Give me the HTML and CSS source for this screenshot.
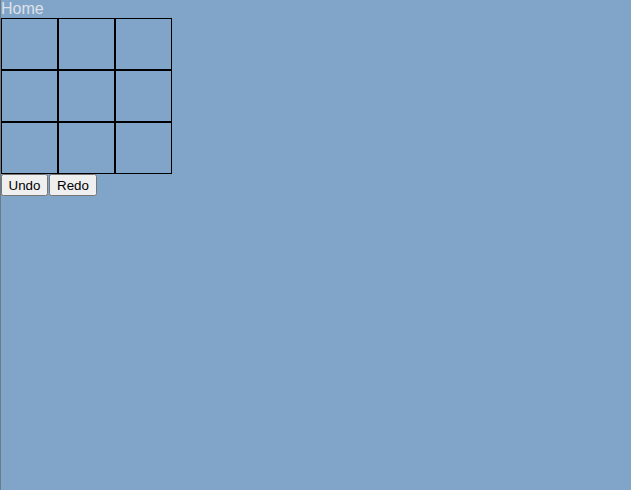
FILE: index.html
```html
<!DOCTYPE html>
<html lang="en">
<head>
    <meta charset="UTF-8">
    <title>Tic Tac Toe</title>
    <link rel="stylesheet" href="styles.css">
</head>
<body>
    <div class="app">
        <a class="home" href="#">Home</a>
        <div class="board">
            <div class="cell"></div>
            <div class="cell"></div>
            <div class="cell"></div>
            <div class="cell"></div>
            <div class="cell"></div>
            <div class="cell"></div>
            <div class="cell"></div>
            <div class="cell"></div>
            <div class="cell"></div>
        </div>
        <div class="controls">
            <button class="undo">Undo</button>
            <button class="redo">Redo</button>
        </div>
    </div>
</body>
</html>
```

FILE: styles.css
```css
html, body {
    margin: 0;
    padding: 0;
    height: 100%;
}
body {
    background-color: #80a5c8;
    font-family: 'Liberation Sans', Arial, sans-serif;
    border-left: 1px solid #6c7b88;
    box-sizing: border-box;
}
.home {
    display: block;
    color: #dfe1ea;
    font-size: 16px;
    line-height: 18px;
    text-decoration: none;
}
.board {
    display: grid;
    grid-template-columns: repeat(3, 57px);
    grid-template-rows: repeat(3, 52px);
    width: 171px;
}
.cell {
    border: 1px solid #000;
}
.controls {
    display: flex;
    gap: 1px;
}
.controls button {
    font-family: 'Liberation Sans', Arial, sans-serif;
    font-size: 13.33px;
    padding: 1px 0;
    height: 22px;
}
.undo {
    width: 47px;
}
.redo {
    width: 48px;
}
```
